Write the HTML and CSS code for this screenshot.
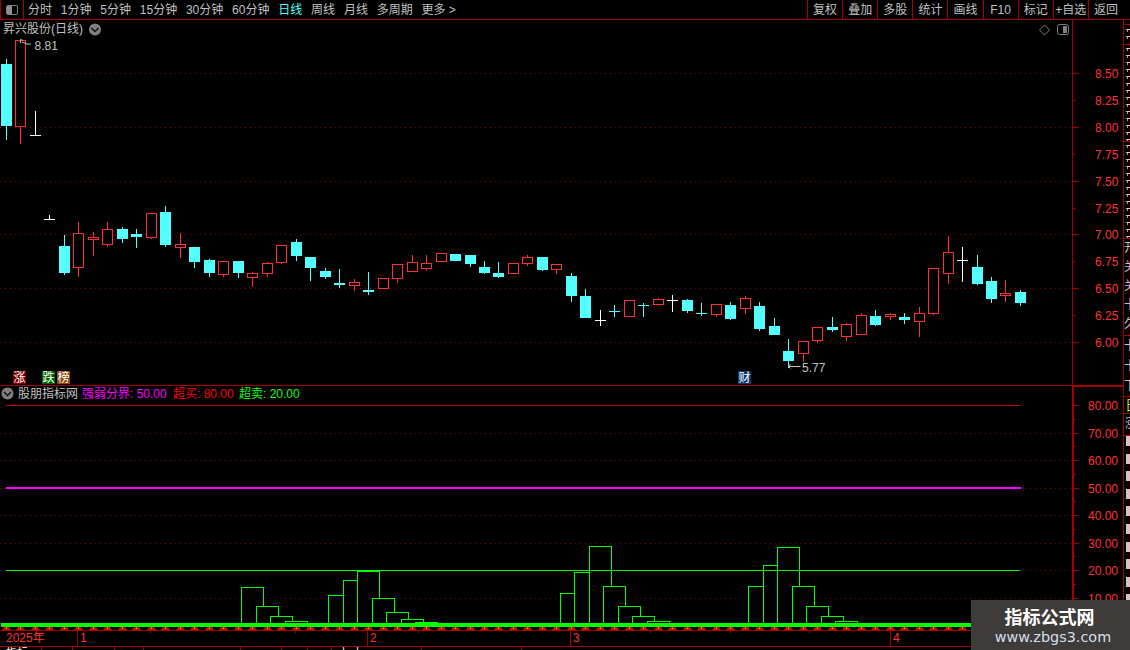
FILE: index.html
```html
<!DOCTYPE html>
<html lang="zh">
<head>
<meta charset="utf-8">
<title>昇兴股份 日线</title>
<link rel="stylesheet" href="styles.css">
</head>
<body>
<div class="app">
  <header class="toolbar">
    <button class="panel-btn" aria-label="切换面板"><span class="panel-icon"></span></button>
    <nav class="periods">
      <span>分时</span><span>1分钟</span><span>5分钟</span><span>15分钟</span><span>30分钟</span><span>60分钟</span>
      <span class="on">日线</span><span>周线</span><span>月线</span><span>多周期</span><span>更多 &gt;</span>
    </nav>
    <nav class="tools">
      <span>复权</span><span>叠加</span><span>多股</span><span>统计</span><span>画线</span><span>F10</span><span>标记</span><span>+自选</span><span>返回</span>
    </nav>
  </header>
  <div class="body-row">
    <main class="charts">
      <svg id="main" class="pane pane-main" viewBox="0 20 1123 366" width="1123" height="366"></svg>
      <svg id="ind" class="pane pane-ind" viewBox="0 386 1123 244" width="1123" height="244"></svg>
      <div class="dates" id="dates">
        <span class="d-year">2025年</span><span class="d-mon d-m1">1</span><span class="d-mon d-m2">2</span><span class="d-mon d-m3">3</span><span class="d-mon d-m4">4</span>
      </div>
      <div class="status">
        <span class="s1">指标</span><span class="s2"></span><span class="s3"></span><span class="s4"></span><span class="s5"></span><span class="s6"></span><span class="s7"></span><span class="s8"></span><span class="s9">十 十</span><span class="s10"></span>
      </div>
    </main>
    <aside class="sliver">
      <div class="sl sl-0"></div>
      <div class="sl sl-a"><i></i><i></i></div>
      <div class="sl sl-b"><i></i><i></i><i></i><i></i><i></i><i></i><i></i><i></i><i></i><i></i><i></i><i></i><i></i><i></i></div>
      <div class="sl sl-b"><i></i><i></i><i></i><i></i><i></i><i></i><i></i><i></i><i></i><i></i><i></i><i></i><i></i><i></i></div>
      <div class="sl sl-c">开<br>关<br>关<br>十<br>久</div>
      <div class="sl sl-d">卡<br>十<br>下</div>
      <div class="sl sl-y">日</div>
      <div class="sl sl-e">涨</div>
      <div class="sl sl-f"><b></b><b></b><b></b><b></b><b></b><b></b><b></b><b></b><b></b><b></b></div>
    </aside>
  </div>
  <div class="watermark">
    <div class="wm-title">指标公式网</div>
    <div class="wm-url">www.zbgs3.com</div>
  </div>
</div>
<script src="script.js"></script>
</body>
</html>
```
FILE: styles.css
```css
* { box-sizing: border-box; }
html, body { margin: 0; padding: 0; background: #000; }
body { width: 1130px; height: 650px; overflow: hidden; }
.app {
  position: relative; width: 1130px; height: 650px; background: #000;
  font-family: "Liberation Sans", "Noto Sans CJK SC", sans-serif;
  font-size: 12px; color: #c0c0c0; display: flex; flex-direction: column;
}
.toolbar {
  height: 20px; display: flex; border-bottom: 1px solid #a80000; flex: none; padding-right: 7px;
}
.panel-btn {
  width: 24px; height: 19px; background: none; padding: 0; margin: 0;
  border: 0; border-left: 1px solid #a80000; border-right: 1px solid #a80000;
  display: flex; align-items: center; justify-content: center;
}
.panel-icon {
  display: block; width: 12px; height: 10px; border: 1px solid #808080; border-radius: 2px;
  background: linear-gradient(90deg, #909090 55%, transparent 55%);
}
.periods { display: flex; gap: 8.8px; padding-left: 4px; padding-top: 1px; line-height: 18px; flex: 1; white-space: nowrap; }
.periods .on { color: #54ffff; }
.tools { display: flex; width: 316px; flex: none; }
.tools span { width: 35.1px; height: 19px; padding-top: 1px; line-height: 18px; flex: none; text-align: center; border-left: 1px solid #a80000; white-space: nowrap; }
.tools span:first-child { width: 35.2px; }
.body-row { display: flex; flex: 1; min-height: 0; }
.charts { width: 1123px; flex: none; display: flex; flex-direction: column; }
.pane { display: block; flex: none; }
.pane text { font-family: "Liberation Sans", "Noto Sans CJK SC", sans-serif; font-size: 12px; }
.t-gray { fill: #c0c0c0; }
.t-red { fill: #ff3232; }
.t-mag { fill: #ff00ff; }
.t-rd { fill: #ff0000; }
.t-grn { fill: #14ff14; }
.t-white { fill: #fff; }
.grid { stroke: #8c0000; stroke-width: 1; stroke-dasharray: 1 4; }
.axis { stroke: #a80000; stroke-width: 1; }
.axis-thick { stroke: #a80000; stroke-width: 2; }
.sep { stroke: #a80000; stroke-width: 1; }
.red-body { fill: #000; stroke: #ff3232; stroke-width: 1; }
.red-wick { fill: #ff3232; }
.cy { fill: #54ffff; }
.wh { fill: #fff; }
.bar { fill: #000; stroke: #00ff00; stroke-width: 1; }
.band { fill: #00ff00; }
.nub { fill: #e80000; }
.ln-red { stroke: #c80000; stroke-width: 1; }
.ln-grn { stroke: #00ff00; stroke-width: 1; }
.ln-mag { stroke: #ff00ff; stroke-width: 2; }
.ico { fill: none; stroke: #808080; stroke-width: 1; }
.ico-fill { fill: #808080; }
.ico-chev { fill: none; stroke: #111; stroke-width: 1.5; }
.arrow { fill: none; stroke: #c0c0c0; stroke-width: 1; }
.dates {
  position: relative; height: 17px; flex: none; border-top: 1px solid #a80000; border-bottom: 1px solid #a80000;
  color: #ff3232; line-height: 15px;
}
.dates span { position: absolute; top: 0; height: 15px; }
.d-year { left: 6px; }
.d-mon { padding-left: 2px; border-left: 1px solid #a80000; }
.d-m1 { left: 77px; }
.d-m2 { left: 367px; }
.d-m3 { left: 570px; }
.d-m4 { left: 890px; }
.dates .tick { top: 0; width: 1px; height: 2px; background: #a80000; }
.status { display: flex; height: 3px; overflow: hidden; color: #fff; line-height: 12px; font-size: 11px; }
.status span { height: 3px; flex: none; border-right: 1px solid #a80000; padding-left: 6px; }
.s1 { width: 42px; } .s2 { width: 31px; } .s3 { width: 42px; } .s4 { width: 29px; } .s5 { width: 97px; }
.s6 { width: 41px; } .s7 { width: 26px; } .s8 { width: 24px; } .s9 { width: 90px; } .s10 { width: 100px; }
.sliver {
  width: 7px; flex: none; border-left: 1px solid #a80000; overflow: hidden; color: #c8c8c8;
  display: flex; flex-direction: column;
}
.sl { overflow: hidden; border-bottom: 1px solid #a80000; flex: none; white-space: nowrap; padding-left: 1px; }
.sl i { display: block; width: 5px; height: 3px; margin-bottom: 4px; border-top: 1px solid #d0d0d0; border-left: 2px solid transparent; }
.sl i::before { content: ""; display: block; width: 1px; height: 2px; background: #a0a0a0; }
.sl-0 { height: 5px; }
.sl-a { height: 20px; padding-top: 4px; }
.sl-b { height: 97px; padding-top: 3px; }
.sl-c { height: 97px; line-height: 19px; font-size: 12px; padding-left: 0; }
.sl-d { height: 61px; line-height: 20px; font-size: 12px; padding-left: 0; }
.sl-y { height: 17px; color: #d8d800; line-height: 17px; font-size: 14px; }
.sl-e { height: 22px; line-height: 20px; font-size: 12px; }
.sl-f { height: 175px; border-bottom: 0; padding-left: 2px; }
.sl-f b { display: block; width: 4px; height: 10px; margin-bottom: 7.6px; background: #c8c8c8; }
.watermark {
  position: absolute; left: 971px; top: 600px; width: 159px; height: 50px;
  background: #3f3b39; text-align: center;
}
.wm-title { color: #fff; font-size: 18px; font-weight: bold; line-height: 20px; margin-top: 6px; margin-left: -2px; font-family: "Noto Sans CJK SC", sans-serif; }
.wm-url { color: #d2dfee; font-family: "DejaVu Sans", sans-serif; font-size: 14.4px; line-height: 18px; margin-top: 2px; margin-left: 5px; }
```
FILE: script.js
```js
var NS = 'http://www.w3.org/2000/svg';
function el(p, n, a, t) {
  var e = document.createElementNS(NS, n);
  for (var k in a) e.setAttribute(k, a[k]);
  if (t != null) e.textContent = t;
  p.appendChild(e);
  return e;
}
function rect(p, x, y, w, h, c) { return el(p, 'rect', { x: x, y: y, width: w, height: h, 'class': c }); }
function line(p, x1, y1, x2, y2, c) { return el(p, 'line', { x1: x1, y1: y1, x2: x2, y2: y2, 'class': c }); }
function text(p, x, y, s, c) { return el(p, 'text', { x: x, y: y, 'class': c }, s); }
/* type, left, bodyTop, bodyBottom, wickTop, wickBottom (r red hollow, c cyan, w white cross, x cyan cross) */
var K = [
 ['c',1,64,126,59,140],['r',15,40,126,39,144],['w',30,135,135,111,136],['w',44,219,219,215,220],
 ['c',59,246,273,235,275],['r',73,233,267,222,277],['r',88,237,239,232,256],['r',102,229,244,222,247],
 ['c',117,229,239,227,243],['c',131,234,237,229,248],['r',146,213,237,213,239],['c',160,212,245,206,247],
 ['r',175,244,247,233,258],['c',189,247,262,247,268],['c',204,260,273,259,277],['r',218,261,274,261,277],
 ['c',233,261,273,261,278],['r',247,273,277,272,287],['r',262,263,273,262,277],['r',276,245,262,245,264],
 ['c',291,242,256,239,261],['c',305,257,268,257,281],['c',320,271,277,268,279],['c',334,283,285,269,288],
 ['r',349,282,285,279,291],['c',363,290,292,272,295],['r',378,278,288,278,289],['r',392,264,278,264,283],
 ['r',407,262,271,255,272],['r',421,263,268,255,271],['r',436,253,261,253,262],['c',450,254,261,254,261],
 ['c',465,255,264,255,267],['c',479,267,273,261,274],['c',493,273,277,262,278],['r',508,263,273,263,274],
 ['r',522,257,263,255,266],['c',537,257,270,257,271],['r',551,264,269,264,274],['c',566,276,296,273,302],
 ['c',580,296,318,289,318],['w',595,320,320,310,326],['x',609,311,311,305,317],['r',624,300,316,300,317],
 ['x',638,305,305,303,317],['r',653,299,304,298,305],['w',667,300,300,295,312],['c',682,300,311,299,313],
 ['x',696,313,313,303,316],['r',711,304,314,304,317],['c',725,305,319,302,320],['r',740,298,308,296,314],
 ['c',754,306,329,302,331],['c',769,326,335,318,335],['c',783,351,361,339,368],['r',798,341,353,341,362],
 ['r',812,327,340,327,343],['c',827,327,330,317,332],['r',841,324,336,323,341],['r',856,315,334,313,335],
 ['c',870,316,325,310,326],['r',885,314,316,313,320],['c',899,317,320,313,324],['r',914,313,321,307,337],
 ['r',928,268,313,268,315],['r',943,252,273,236,284],['w',957,260,260,247,282],['c',972,267,284,255,285],
 ['c',986,281,299,277,303],['r',1000,293,295,280,302],['c',1015,292,303,290,306]
];
var m = document.getElementById('main');
text(m, 3, 33, '昇兴股份(日线)', 't-gray');
el(m, 'circle', { cx: 95, cy: 29.5, r: 6, 'class': 'ico-fill' });
el(m, 'path', { d: 'M91.5 28l3.5 3.5 3.5-3.5', 'class': 'ico-chev' });
el(m, 'path', { d: 'M1044.5 25l5 5-5 5-5-5z', 'class': 'ico' });
rect(m, 1057.5, 24.5, 11, 10, 'ico').setAttribute('rx', 2);
rect(m, 1063, 26, 4, 7, 'ico-fill');
[[73,'8.50'],[127,'8.00'],[181,'7.50'],[234,'7.00'],[288,'6.50'],[342,'6.00']].forEach(function (g) {
  line(m, 0, g[0] + .5, 1072, g[0] + .5, 'grid');
  line(m, 1072, g[0] + .5, 1079, g[0] + .5, 'axis');
  text(m, 1095, g[0] + 5, g[1], 't-red');
});
[[100,'8.25'],[154,'7.75'],[208,'7.25'],[261,'6.75'],[315,'6.25']].forEach(function (g) {
  line(m, 1072, g[0] + .5, 1075, g[0] + .5, 'axis');
  text(m, 1095, g[0] + 5, g[1], 't-red');
});
line(m, 1072.5, 20, 1072.5, 386, 'axis');
line(m, 0, 385.5, 1123, 385.5, 'sep');
K.forEach(function (c) {
  var t = c[0], L = c[1], cx = L + 5;
  if (t === 'r') {
    rect(m, cx, c[4], 1, c[5] - c[4], 'red-wick');
    rect(m, L + .5, c[2] + .5, 10, c[3] - c[2], 'red-body');
  } else if (t === 'c') {
    rect(m, cx, c[4], 1, c[5] - c[4], 'cy');
    rect(m, L, c[2], 11, c[3] - c[2], 'cy');
  } else {
    var k = t === 'w' ? 'wh' : 'cy';
    rect(m, cx, c[4], 1, c[5] - c[4], k);
    rect(m, L, c[2], 11, 1, k);
  }
});
el(m, 'path', { d: 'M20 40h3M21 41l-1 1 1 1M22 42l5 2h4', 'class': 'arrow' });
text(m, 34.5, 50, '8.81', 't-gray');
el(m, 'path', { d: 'M790.5 364l-2 2.5 2 2M788.5 366.5h12', 'class': 'arrow' });
text(m, 802, 372, '5.77', 't-gray');
[[13,'涨','#800000'],[42,'跌','#006400'],[57,'榜','#8a4a10'],[738,'财','#0a3a6e']].forEach(function (b) {
  el(m, 'rect', { x: b[0], y: 371, width: 13, height: 13, fill: b[2] });
  text(m, b[0] + .5, 382, b[1], 't-white');
});

var n = document.getElementById('ind');
el(n, 'circle', { cx: 7.5, cy: 393.5, r: 6, 'class': 'ico-fill' });
el(n, 'path', { d: 'M4 392l3.5 3.5 3.5-3.5', 'class': 'ico-chev' });
text(n, 18, 398, '股朋指标网', 't-gray');
text(n, 82, 398, '强弱分界: 50.00', 't-mag');
text(n, 173, 398, '超买: 80.00', 't-rd');
text(n, 239, 398, '超卖: 20.00', 't-grn');
[433, 460, 488, 515, 543, 570, 598].forEach(function (y) { line(n, 0, y + .5, 1073, y + .5, 'grid'); });
[[405,'80.00'],[433,'70.00'],[460,'60.00'],[488,'50.00'],[515,'40.00'],[543,'30.00'],[570,'20.00'],[598,'10.00']].forEach(function (g) {
  line(n, 1073, g[0] + .5, 1079, g[0] + .5, 'axis');
  text(n, 1088, g[0] + 5, g[1], 't-red');
});
[419, 446, 474, 501, 529, 556, 584, 612].forEach(function (y) { line(n, 1073, y + .5, 1076, y + .5, 'axis'); });
line(n, 1073, 386, 1073, 630, 'axis-thick');
line(n, 1073, 386, 1123, 386, 'axis-thick');
[[241,587],[256,606],[270,616],[285,621],[328,595],[343,580],[357,571],[372,598],[386,612],[401,619],[415,622],
 [560,593],[574,572],[589,546],[603,586],[618,606],[632,616],[647,621],
 [748,586],[763,565],[777,547],[792,586],[806,606],[821,616],[835,621]].forEach(function (b) {
  rect(n, b[0] + .5, b[1] + .5, 22, 626 - b[1], 'bar');
});
line(n, 6, 405.5, 1020, 405.5, 'ln-red');
line(n, 6, 488, 1021, 488, 'ln-mag');
line(n, 6, 570.5, 1020, 570.5, 'ln-grn');
rect(n, 415, 622, 23, 2, 'band');
rect(n, 1, 623, 1021, 4, 'band');
K.forEach(function (c) {
  var x = c[1] + 5;
  el(n, 'path', { d: 'M' + (x - 4) + ' 630l2-3h5l2 3z', 'class': 'nub' });
  rect(n, x, 627, 1, 2, 'band');
});
var dates = document.getElementById('dates');
[150, 295, 418, 650, 730, 809].forEach(function (x) {
  var s = document.createElement('span');
  s.className = 'tick';
  s.style.left = x + 'px';
  dates.appendChild(s);
});
```
